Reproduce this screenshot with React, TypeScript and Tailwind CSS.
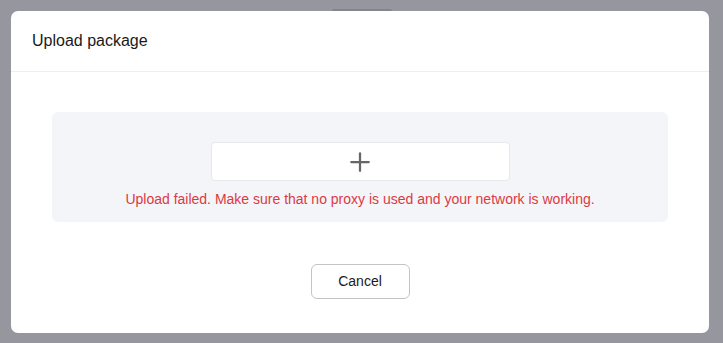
import { Plus } from "lucide-react";

export default function App() {
  return (
    <div className="relative w-[723px] h-[343px] bg-[#96969e] p-[11px] overflow-hidden [font-family:'Liberation_Sans',Arial,sans-serif]">
      {/* something behind the dialog peeking out */}
      <div className="absolute left-[332px] top-[9px] w-[60px] h-[2px] rounded-t bg-[#85858d]" />

      <div className="relative w-[698px] h-[322px] bg-white rounded-[7px] flex flex-col">
        {/* Header */}
        <div className="h-[61px] flex items-center pl-[21px] border-b border-[#eeeef0] shrink-0">
          <span className="text-[16px] text-[#1a1a1a]">Upload package</span>
        </div>

        {/* Body */}
        <div className="flex flex-col items-center pt-[40px] px-[41px]">
          <div className="w-full h-[110px] bg-[#f4f5f9] rounded-[6px] flex flex-col items-center pt-[30px]">
            <button className="w-[299px] h-[39px] bg-white border border-[#e6e8ee] rounded-[4px] flex items-center justify-center">
              <Plus className="w-[30px] h-[30px] text-[#666666]" strokeWidth={1.8} />
            </button>
            <p className="mt-[8px] text-[14px] text-[#dc3a42]">
              Upload failed. Make sure that no proxy is used and your network is working.
            </p>
          </div>

          <button className="mt-[42px] w-[99px] h-[35px] border border-[#c4c4c4] rounded-[6px] bg-white text-[14px] text-[#1a1a1a]">
            Cancel
          </button>
        </div>
      </div>
    </div>
  );
}
